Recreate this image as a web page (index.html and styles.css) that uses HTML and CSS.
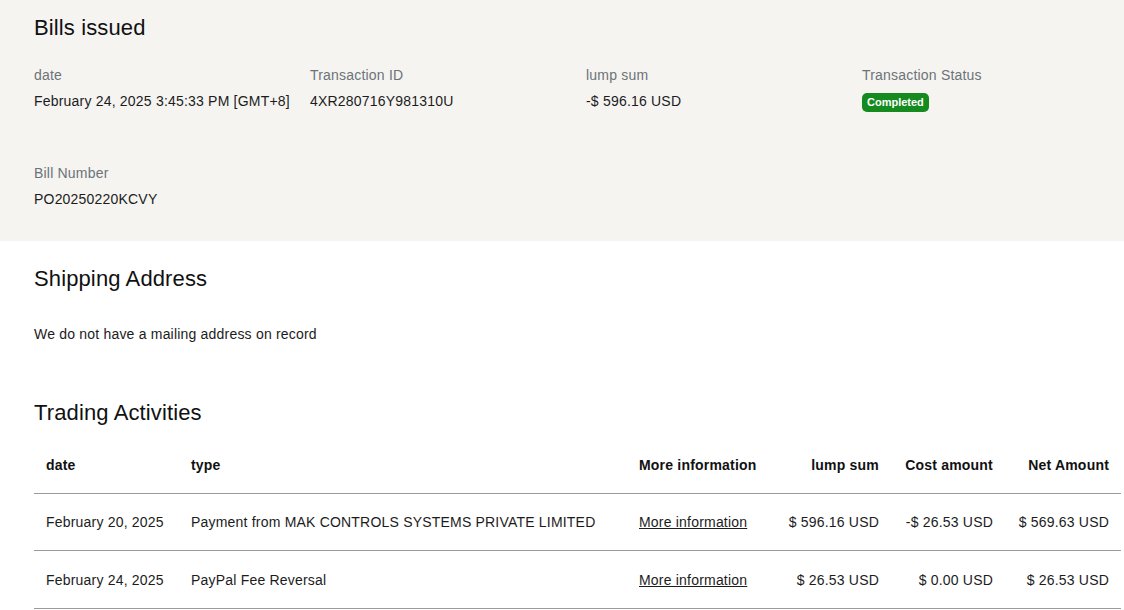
FILE: index.html
```html
<!DOCTYPE html>
<html lang="en">
<head>
<meta charset="utf-8">
<title>Bills issued</title>
<link rel="stylesheet" href="styles.css">
</head>
<body>
<section class="summary">
  <h2 class="title">Bills issued</h2>
  <div class="fields">
    <div class="field">
      <div class="label">date</div>
      <div class="value">February 24, 2025 3:45:33 PM [GMT+8]</div>
    </div>
    <div class="field">
      <div class="label">Transaction ID</div>
      <div class="value">4XR280716Y981310U</div>
    </div>
    <div class="field">
      <div class="label">lump sum</div>
      <div class="value">-$ 596.16 USD</div>
    </div>
    <div class="field">
      <div class="label">Transaction Status</div>
      <div class="value"><span class="badge">Completed</span></div>
    </div>
    <div class="field">
      <div class="label">Bill Number</div>
      <div class="value">PO20250220KCVY</div>
    </div>
  </div>
</section>

<section class="shipping">
  <h2 class="title">Shipping Address</h2>
  <p class="note">We do not have a mailing address on record</p>
</section>

<section class="activities">
  <h2 class="title">Trading Activities</h2>
  <table class="tx">
    <colgroup>
      <col class="c-date"><col class="c-type"><col class="c-info"><col class="c-sum"><col class="c-cost"><col class="c-net">
    </colgroup>
    <thead>
      <tr>
        <th>date</th>
        <th>type</th>
        <th>More information</th>
        <th class="num">lump sum</th>
        <th class="num">Cost amount</th>
        <th class="num">Net Amount</th>
      </tr>
    </thead>
    <tbody>
      <tr>
        <td>February 20, 2025</td>
        <td>Payment from MAK CONTROLS SYSTEMS PRIVATE LIMITED</td>
        <td><a href="#" class="link">More information</a></td>
        <td class="num">$ 596.16 USD</td>
        <td class="num">-$ 26.53 USD</td>
        <td class="num">$ 569.63 USD</td>
      </tr>
      <tr>
        <td>February 24, 2025</td>
        <td>PayPal Fee Reversal</td>
        <td><a href="#" class="link">More information</a></td>
        <td class="num">$ 26.53 USD</td>
        <td class="num">$ 0.00 USD</td>
        <td class="num">$ 26.53 USD</td>
      </tr>
    </tbody>
  </table>
</section>
</body>
</html>
```

FILE: styles.css
```css
* { box-sizing: border-box; }

html, body {
  margin: 0;
  padding: 0;
  background: #ffffff;
}

body {
  font-family: "Liberation Sans", Arial, sans-serif;
  font-size: 14px;
  line-height: 20px;
  letter-spacing: 0.2px;
  color: #1c1c1c;
  width: 1124px;
  overflow: hidden;
}

.title {
  margin: 0;
  font-size: 22px;
  line-height: 28px;
  font-weight: 400;
  letter-spacing: 0.12px;
  color: #111111;
}

.summary {
  background: #f5f4f1;
  padding: 14px 34px 0;
  height: 241px;
}

.fields {
  margin-top: 23px;
  display: grid;
  grid-template-columns: repeat(4, 276px);
  row-gap: 52px;
}

.field {
  display: flex;
  flex-direction: column;
  gap: 6px;
}

.label {
  color: #6c7378;
}

.value {
  color: #1c1c1c;
  display: flex;
  align-items: center;
  height: 20px;
}

.badge {
  display: inline-block;
  background: #148a1f;
  color: #ffffff;
  font-weight: 700;
  font-size: 11px;
  letter-spacing: 0;
  line-height: 19px;
  height: 19px;
  padding: 0 5px;
  border-radius: 5px;
  margin-top: 2px;
}

.shipping {
  padding: 24px 34px 0;
}

.note {
  margin: 31px 0 0;
}

.activities {
  padding: 55px 0 0 34px;
}

.tx {
  margin-top: 10px;
  width: 1087px;
  table-layout: fixed;
  border-collapse: collapse;
}

.c-date { width: 145px; }
.c-type { width: 448px; }
.c-info { width: 141px; }
.c-sum { width: 123px; }
.c-cost { width: 114px; }
.c-net { width: 116px; }

.tx th,
.tx td {
  padding: 18px 12px;
  text-align: left;
  white-space: nowrap;
  border-bottom: 1px solid #9b9b9b;
  color: #1c1c1c;
}

.tx th {
  font-weight: 700;
  color: #111111;
}

.tx tbody tr:last-child td {
  padding-top: 19px;
}

.tx .num {
  text-align: right;
}

.link {
  color: #1c1c1c;
  text-decoration: underline;
}
```
